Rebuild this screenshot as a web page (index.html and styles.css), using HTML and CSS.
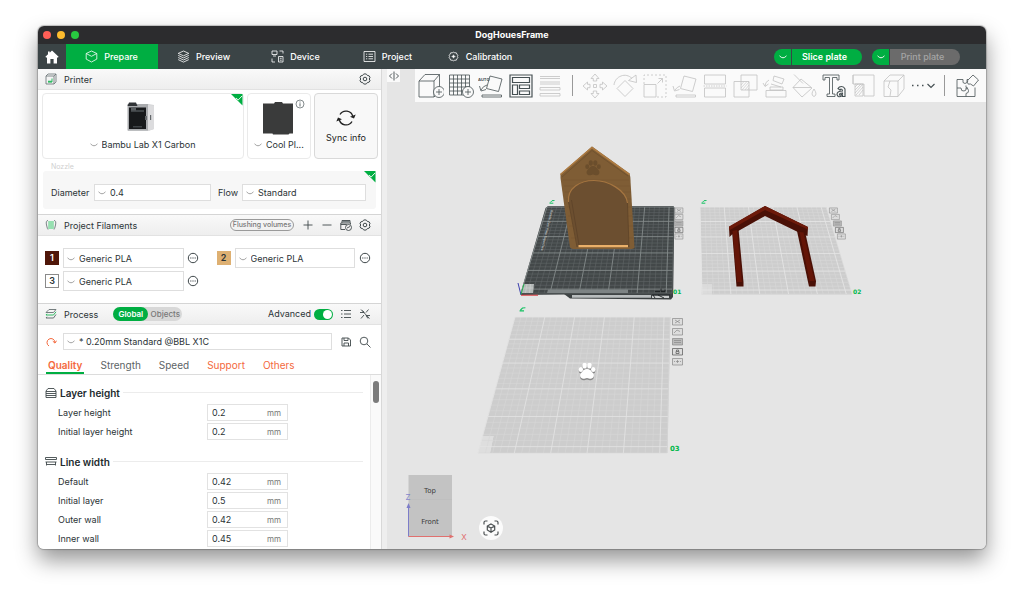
FILE: index.html
```html
<!DOCTYPE html>
<html lang="en">
<head>
<meta charset="utf-8">
<title>DogHouesFrame</title>
<link rel="stylesheet" href="styles.css">
</head>
<body>
<svg class="defs" aria-hidden="true">
  <symbol id="chev" viewBox="0 0 8 8"><path d="M.5 2.800Q4 6.800 7.500 2.800" fill="none" stroke="currentColor" stroke-width=".9"/></symbol>
  <symbol id="gear" viewBox="0 0 12 12"><g fill="none" stroke="currentColor"><path d="M4.4 1.3 6 .8l1.6.5.8 1.2 1.7.3.9 1.5-.7 1.7.7 1.7-.9 1.5-1.7.3-.8 1.2-1.6.5-1.6-.5-.8-1.2-1.7-.3L1 7.7 1.700 6 1 4.300l.9-1.500 1.700-.3z"/><circle cx="6" cy="6" r="1.800"/></g></symbol>
  <symbol id="dots" viewBox="0 0 12 12"><circle cx="6" cy="6" r="4.700" fill="none" stroke="currentColor"/><path d="M3.200 5.500h1.200v1H3.200zM5.400 5.500h1.200v1H5.400zM7.600 5.500h1.200v1H7.600z" fill="currentColor"/></symbol>
  <symbol id="ok" viewBox="0 0 12 12"><path d="M0 0h11.500v11.500z" fill="#00ae42"/><path d="m5 4 2.200 2L11 2" fill="none" stroke="#fff" stroke-width=".9"/></symbol>
  <symbol id="pen" viewBox="0 0 6 4"><path d="M.5 3.200h3.800M1.200 2.600 3 .7l2.500-.2" fill="none" stroke="#12c160" stroke-width="1"/></symbol>
  <symbol id="paw" viewBox="0 0 20 20"><ellipse cx="2.800" cy="8.300" rx="2.500" ry="3"/><ellipse cx="7.200" cy="3.800" rx="2.600" ry="3.400"/><ellipse cx="12.900" cy="3.800" rx="2.600" ry="3.400"/><ellipse cx="17.300" cy="8.300" rx="2.500" ry="3"/><path d="M10 7.500c3.500 0 4.500 2.500 6.700 4.700 2.800 2.900 1 7-2.400 7-1.700 0-2.600-1-4.300-1s-2.600 1-4.300 1c-3.400 0-5.200-4.100-2.400-7C5.500 10 6.500 7.500 10 7.500z"/></symbol>
</svg>

<main class="window">
  <header class="titlebar">
    <div class="lights"><i class="light close"></i><i class="light min"></i><i class="light max"></i></div>
    <h1 class="title">DogHouesFrame</h1>
  </header>

  <nav class="navbar">
    <button class="home" aria-label="Home"><svg class="i14" viewBox="0 0 14 14"><path d="M7 .5 13.600 6.800 12.800 7.800 12 7.200V13.400H8.600V9H5.400v4.400H2V7.200l-.8.6-.8-1L3 4.300V1.500h1.700v1.200z" fill="#fff"/></svg></button>
    <button class="navtab active"><svg class="i13" viewBox="0 0 13 13"><path d="M6.500 1 11.800 3.500v5.600L6.500 12 1.200 9.100V3.500zM1.200 3.500 6.500 6.300l5.300-2.800" class="ln"/></svg>Prepare</button>
    <button class="navtab"><svg class="i13" viewBox="0 0 13 13"><path d="m6.500 1 5.300 2.400-5.300 2.400-5.300-2.400zM1.200 5.400l5.300 2.500 5.300-2.500M1.200 7.500l5.300 2.500 5.300-2.500M1.200 9.600l5.300 2.500 5.300-2.500" class="ln"/></svg>Preview</button>
    <button class="navtab"><svg class="i13" viewBox="0 0 13 13"><path d="M1 1h5v3.500H1zM2 6h3M8.500 1H12v2.500M1 8.500V12h3M7.500 6.500H12V12H7.500zM8.800 8.300h1.900M8.800 10.200h1.900" class="ln"/></svg>Device</button>
    <button class="navtab"><svg class="i13" viewBox="0 0 13 13"><path d="M1 1.500h11v10H1zM3 4.200h1.200M5.500 4.200H10M3 6.500h1.200M5.500 6.500H10M3 8.800h1.200M5.500 8.800H10" class="ln"/></svg>Project</button>
    <button class="navtab"><svg class="i13" viewBox="0 0 13 13"><path d="m6.500 2.200 1.300.6 1.500 0 .6 1.400 1 1-.5 1.300.5 1.300-1 1-.6 1.400-1.500 0-1.300.6-1.300-.6-1.500 0-.6-1.400-1-1 .5-1.300-.5-1.300 1-1 .6-1.400 1.500 0z" class="ln"/><path d="m6.500 4.700.6 1.200 1.300.6-1.300.6-.6 1.200-.6-1.200-1.300-.6 1.300-.6z" fill="#fff" stroke="#fff" stroke-width=".4"/></svg>Calibration</button>
    <div class="actions">
      <div class="split"><button class="drop" aria-label="Slice options"><svg class="i8"><use href="#chev"/></svg></button><button class="go">Slice plate</button></div>
      <div class="split"><button class="drop" aria-label="Print options"><svg class="i8"><use href="#chev"/></svg></button><button class="go off">Print plate</button></div>
    </div>
  </nav>

  <div class="work">
    <aside class="sidebar">
      <section>
        <div class="bar first">
          <svg class="i12" viewBox="0 0 12 12"><path d="M1 3h8v8H1zM1 3l2-2h8L9 3M11 1v8L9 11" fill="none" stroke="#667072" stroke-width=".8"/><path d="M3 9h4V5.500" fill="none" stroke="#2fbb63"/><path d="M3 8.500h4" stroke="#2fbb63" stroke-width="1.500"/></svg>
          <h2 class="name">Printer</h2>
          <button class="ib push" aria-label="Printer settings"><svg class="i12"><use href="#gear"/></svg></button>
        </div>
        <div class="cards">
          <div class="card wide">
            <svg class="ok"><use href="#ok"/></svg>
            <svg class="pic" viewBox="0 0 34 34"><path d="M3 3h20l6 1v24l-6 2H3z" fill="#cfd0d2"/><path d="M23 4l6 .5V28l-6 2z" fill="#dcdcde"/><path d="M2.500 3h20.500v26.500h-20.500z" fill="#a9abae"/><path d="M4 6.500h17V28H4z" fill="#17191b"/><path d="M4 1.500h7l1.500 3.500H2.500z" fill="#303336"/><path d="M6 9h13v2H6zM8 25h9v1.500H8z" fill="#3e4346"/><path d="M6 6.500h5v3H6z" fill="#5a5e61"/><path d="M20 15h2v4h-2zM25 14h1.200v5H25z" fill="#64686b"/></svg>
            <label class="pick"><svg class="i8"><use href="#chev"/></svg><select aria-label="Printer model"><option>Bambu Lab X1 Carbon</option></select></label>
          </div>
          <div class="card">
            <svg class="info" viewBox="0 0 10 10"><circle cx="5" cy="5" r="4" fill="none" stroke="#667072" stroke-width=".8"/><path d="M5 4.300V7.500M5 2.500v1" stroke="#667072"/></svg>
            <svg class="pic" viewBox="0 0 32 34"><path d="M1 2.500h11l1-1.500h7l1 1.500h10v30h-3.500l-1 1H11l-.5-1H1z" fill="#3a3b3b"/></svg>
            <label class="pick"><svg class="i8"><use href="#chev"/></svg><select aria-label="Plate type"><option>Cool Pl...</option></select></label>
          </div>
          <button class="card sync"><svg class="i20" viewBox="0 0 20 20"><path d="M4 6.500A7 7 0 0 1 16.800 8.500M16 13.500A7 7 0 0 1 3.200 11.500" fill="none" stroke="currentColor" stroke-width="1.300"/><path d="m14 8.800 4 1.700 1.700-4zM6 11.200 2 9.500.3 13.500z" fill="currentColor"/></svg>Sync info</button>
        </div>
        <p class="legend">Nozzle</p>
        <div class="nozzle">
          <svg class="ok"><use href="#ok"/></svg>
          <label for="dia">Diameter</label>
          <div class="sel"><svg class="i8"><use href="#chev"/></svg><select id="dia"><option>0.4</option></select></div>
          <label for="flow" class="flow">Flow</label>
          <div class="sel grow"><svg class="i8"><use href="#chev"/></svg><select id="flow"><option>Standard</option></select></div>
        </div>
      </section>

      <section>
        <div class="bar">
          <svg class="i12" viewBox="0 0 12 12"><path d="M3 1.500Q.5 1.500 1.500 6T3 10.500M9 1.500q2.500 0 1.500 4.500T9 10.500" fill="none" stroke="#7b8486"/><path d="M3.500 2h5v8h-5z" fill="#c9f0d6"/><path d="M4 2v8M6 2v8M8 2v8" stroke="#4cc67a" stroke-width=".8"/></svg>
          <h2 class="name">Project Filaments</h2>
          <button class="flush push">Flushing volumes</button>
          <button class="ib" aria-label="Add filament"><svg class="i12" viewBox="0 0 12 12"><path d="M6 1.500v9M1.500 6h9" class="st"/></svg></button>
          <button class="ib" aria-label="Remove filament"><svg class="i12" viewBox="0 0 12 12"><path d="M1.500 6h9" class="st"/></svg></button>
          <button class="ib" aria-label="Sync filaments"><svg class="i12" viewBox="0 0 12 12"><path d="M5 10.500H.8V4h9.700v1.500M2 4V1.500h8V4M.8 5.500h6" class="st"/><path d="M2 2h8v1.500H2z" fill="#7a8385"/><circle cx="8.500" cy="8.500" r="3" class="st"/><path d="m7 9 3-1.500" class="st"/></svg></button>
          <button class="ib" aria-label="Filament settings"><svg class="i12"><use href="#gear"/></svg></button>
        </div>
        <div class="filaments">
          <div class="fil"><span class="sw brown">1</span><div class="sel grow"><svg class="i8"><use href="#chev"/></svg><select aria-label="Filament 1"><option>Generic PLA</option></select></div><button class="ib" aria-label="Edit filament 1"><svg class="i12"><use href="#dots"/></svg></button></div>
          <div class="fil"><span class="sw tan">2</span><div class="sel grow"><svg class="i8"><use href="#chev"/></svg><select aria-label="Filament 2"><option>Generic PLA</option></select></div><button class="ib" aria-label="Edit filament 2"><svg class="i12"><use href="#dots"/></svg></button></div>
          <div class="fil"><span class="sw">3</span><div class="sel grow"><svg class="i8"><use href="#chev"/></svg><select aria-label="Filament 3"><option>Generic PLA</option></select></div><button class="ib" aria-label="Edit filament 3"><svg class="i12"><use href="#dots"/></svg></button></div>
        </div>
      </section>

      <section class="process">
        <div class="bar">
          <svg class="i12" viewBox="0 0 12 12"><path d="M1 4.500 4 1.500h7L8.500 4.500z" fill="none" stroke="#667072" stroke-width=".9"/><path d="M11 3.800 8.500 7H1l1-1.200" fill="none" stroke="#2fbb63"/><path d="M11 6.500 8.500 10H1l1-1.200" fill="none" stroke="#667072"/></svg>
          <h2 class="name">Process</h2>
          <div class="seg"><button class="on">Global</button><button>Objects</button></div>
          <label for="adv" class="push">Advanced</label>
          <input type="checkbox" id="adv" class="toggle" checked>
          <button class="ib" aria-label="List view"><svg class="i12" viewBox="0 0 12 12"><path d="M1 2.500h1.500M4 2.500h7M1 6h1.500M4 6h7M1 9.500h1.500M4 9.500h7" class="st"/></svg></button>
          <button class="ib" aria-label="Compare presets"><svg class="i12" viewBox="0 0 12 12"><path d="M2 1.500 10.500 10.500M1 4.500h4M3.500 2.500l1.800 2M11 7.500H7M7 7.500l2 3M7 4.500 9.500 1.500M2 10.500l3-3.500" class="st"/></svg></button>
        </div>
        <div class="preset">
          <button class="ib reset" aria-label="Reset preset"><svg class="i12" viewBox="0 0 12 12"><path d="M4 10A4 4 0 1 1 10 6.500M7.800 5.200l2.200 1.900 1.500-2.400" fill="none" stroke="currentColor"/></svg></button>
          <div class="sel grow"><svg class="i8"><use href="#chev"/></svg><select aria-label="Process preset"><option>* 0.20mm Standard @BBL X1C</option></select></div>
          <button class="ib" aria-label="Save preset"><svg class="i12" viewBox="0 0 12 12"><path d="M2 2h6.500L10.500 4v6H2zM4 2v2.500h4V2M4 10V7h4.500v3" class="st"/></svg></button>
          <button class="ib" aria-label="Search settings"><svg class="i12" viewBox="0 0 12 12"><circle cx="5" cy="5" r="3.800" class="st"/><path d="m8 8 3.500 3.500" class="st"/></svg></button>
        </div>
        <div class="tabs">
          <button class="tab current">Quality</button><button class="tab">Strength</button><button class="tab">Speed</button><button class="tab changed">Support</button><button class="tab changed">Others</button>
        </div>
        <div class="scroller">
          <div class="params">
            <h3 class="group"><svg class="i12" viewBox="0 0 12 12"><path d="M1 10.500V4L3 1.500h6L11 4v6.500zM1 4.500h10M1 6.500h10M1 8.500h10" class="st"/></svg>Layer height</h3>
            <div class="row"><label for="p1">Layer height</label><span class="num"><input id="p1" value="0.2"><span>mm</span></span></div>
            <div class="row"><label for="p2">Initial layer height</label><span class="num"><input id="p2" value="0.2"><span>mm</span></span></div>
            <h3 class="group"><svg class="i12" viewBox="0 0 12 12"><path d="M.5 1.500h11v2H.5zM.5 6h11M1.500 6v3.500M10.500 6v3.500M1.500 8.500h9" class="st"/></svg>Line width</h3>
            <div class="row"><label for="p3">Default</label><span class="num"><input id="p3" value="0.42"><span>mm</span></span></div>
            <div class="row"><label for="p4">Initial layer</label><span class="num"><input id="p4" value="0.5"><span>mm</span></span></div>
            <div class="row"><label for="p5">Outer wall</label><span class="num"><input id="p5" value="0.42"><span>mm</span></span></div>
            <div class="row"><label for="p6">Inner wall</label><span class="num"><input id="p6" value="0.45"><span>mm</span></span></div>
          </div>
          <div class="track"><div class="thumb"></div></div>
        </div>
      </section>
    </aside>

    <div class="splitter"></div>

    <section class="stage">
      <svg class="scene" viewBox="387 69 599 480" preserveAspectRatio="xMinYMin meet">
        <g id="plate1">
          <path d="M564 294 570 298.500 671 299.500 673 297V290z" fill="#3c4142"/>
          <path d="M572 295h79v2.800h-79z" fill="#b9bdbe"/>
          <path d="M548 206h125.500l1 2-1.300 85-1.500 1.500L567 294.500l-46 .5-.5-1.500L545.500 208z" fill="#434849"/>
          <g class="grid" data-quad="547,207 674,207 672,293 521,293" data-n="26" data-minor="#5f6566" data-major="#858b8b"></g>
          <path d="M548 289.500h80v3.500h-81z" fill="#7d8384"/>
          <path d="M652 295.500h17v2.500h-17z" fill="#c9cccc"/><path d="M652 295h18M653 295l2 3M658 295l6 3M655 291.500h5M661 288.500v3h4v-2" fill="none" stroke="#1c2021" stroke-width=".9"/>
          <path d="M523.500 284h10.500l-1 9h-12z" fill="#b5b9b8"/><path d="M527 284l-1.500 9M530.500 284l-1 9M522.500 288h11" stroke="#d2d5d4" stroke-width=".6"/>
          <text class="plate-text" transform="translate(551 210) rotate(104)">Bambu Cool Plate SuperTack</text>
          <path d="M521 295 518 283" stroke="#3b3fae"/><path d="M521 294.500 524 284" stroke="#1fb04c"/><path d="M521 295.200h17" stroke="#d9363a"/>
        </g>
        <g id="house">
          <path d="M592 146.500 629.500 173.500 630.300 177 634.500 248 632 249H572.500L570 247.500 560.500 178V174z" fill="#7f5d35"/>
          <path d="M560.500 174.500 592 147.500 629.500 174.500" fill="none" stroke="#ad7b42" stroke-width="1.600"/>
          <path d="M562 177 592 150.500 628 176" fill="none" stroke="#6b4d2b" stroke-width=".7"/>
          <path d="M563 180h66M564 186h66M565 192h66M566 199h65M567 207h65M568 216h64M569 226h64M571 238h62" stroke="#76552f" stroke-width=".6"/>
          <path d="M577.500 247 568.500 202C567 188 580 180.500 594 180.500S626 190 627.500 203L629 247z" fill="#6c4f30"/>
          <path d="M568.500 202C567 188 580 180.500 594 180.500S626 190 627.500 203" fill="none" stroke="#a57540" stroke-width="1.200"/>
          <path d="M568.500 202 577 247M571.500 200 579 245M627.500 203 629 247" fill="none" stroke="#5a4126" stroke-width=".7"/>
          <path d="M578.500 245H628v2.300h-49.500z" fill="#eab069"/>
          <svg x="585" y="160" width="16" height="16" fill="#6b4e2c"><use href="#paw"/></svg>
        </g>
        <g id="plate2">
          <path d="M700 207H826L852 294.500H712V284.500H702z" fill="#cdcdcd"/>
          <path d="M702 284.500h10v10h-11z" fill="#dcdcdc"/>
          <g class="grid" data-quad="700,207 826,207 852,294 702,294" data-n="26" data-minor="#d8d8d8" data-major="#e4e4e4"></g>
          <path d="M729 227 765 206 808 227 807.500 236 803 234.500 765 216 732 234.500 729.500 237z" fill="#4a1006"/>
          <path d="M729 226.500 765 206 808 227V229.500L765 210 729 230.500z" fill="#6d1a0a"/>
          <path d="M732 230.500 738.500 229 743.500 282V286.500H736.500z" fill="#4a1006"/><path d="M732.500 231 737 230 742 282H737z" fill="#641507"/>
          <path d="M797 231 805 231.500 816 281 815.500 286.500H809z" fill="#4a1006"/><path d="M799.500 232 803.500 232.500 814.500 281H809.500z" fill="#641507"/>
        </g>
        <g id="plate3">
          <path d="M515 317H670.500L667.500 453H490L493.500 436H482.500z" fill="#cdcdcd"/>
          <path d="M482.500 436h11L490 453H478z" fill="#dedede"/>
          <g class="grid" data-quad="515,317 670,317 667,453 478,453" data-n="26" data-minor="#d7d7d7" data-major="#e2e2e2"></g>
          <svg x="578" y="364" width="18" height="17" fill="#888"><use href="#paw"/></svg>
          <svg x="578" y="362.500" width="18" height="17" fill="#fff"><use href="#paw"/></svg>
        </g>
        <g id="tags"></g>
        <svg x="549" y="200" width="6" height="4"><use href="#pen"/></svg>
        <svg x="701" y="200" width="6" height="4"><use href="#pen"/></svg>
        <svg x="519" y="307" width="7" height="5"><use href="#pen"/></svg>
        <text class="plate-no" x="673" y="294">01</text>
        <text class="plate-no" x="853" y="294">02</text>
        <text class="plate-no big" x="670" y="451">03</text>
        <path d="M408.500 475H452v61.500h-43.500z" fill="#c3c3c3"/><path d="M408.500 499.500H452" stroke="#bcbcbc" stroke-width=".6"/>
        <text class="face" x="430" y="493">Top</text><text class="face" x="430" y="524">Front</text>
        <path d="M408.500 536.500V508" stroke="#7d7dc9"/><path d="m408.500 503 2 5h-4z" fill="#7d7dc9"/>
        <path d="M408.500 536.500H450" stroke="#e0706e"/><path d="m454 536.500-4.500 2v-4z" fill="#e0706e"/>
        <text class="axis z" x="408" y="500">Z</text><text class="axis x" x="464" y="540">X</text>
      </svg>
      <div class="overlay">
        <button class="collapse" aria-label="Collapse sidebar"><svg class="i12" viewBox="0 0 12 12"><path d="M4 3.500 1.500 6 4 8.500M8 3.500 10.500 6 8 8.500M6 1.500v9" class="st"/></svg></button>
        <div class="toolbar">
          <button class="tool" aria-label="Add model"><svg viewBox="0 0 26 26"><path d="M1 8h15v16H1zM1 8l6-6.500h14.500L16 8M21.500 1.500V14M16 24l1-1"/><circle cx="21" cy="19" r="5.500" fill="#fafafa"/><path d="M21 16v6M18 19h6"/></svg></button>
          <button class="tool" aria-label="Add plate"><svg viewBox="0 0 26 26"><path d="M1.500 2h20v20h-20zM5.500 2v20M9.500 2v20M13.500 2v20M17.500 2v20M1.500 6h20M1.500 10h20M1.500 14h20M1.500 18h20"/><circle cx="20" cy="19" r="5.500" fill="#fafafa"/><path d="M20 16v6M17 19h6"/></svg></button>
          <button class="tool" aria-label="Auto orient"><svg viewBox="0 0 26 26"><path d="m12 3 12 3-3.500 12.500-12-3zM4 24h19.500v-2H4zM9 12q-4 1-6 5M1.500 13l1.500 5 5-1.500"/><text x="0" y="8" class="auto">AUTO</text></svg></button>
          <button class="tool" aria-label="Arrange"><svg viewBox="0 0 26 26"><path d="M2 2h22v22H2zM4.500 4.500h17v5h-17zM4.500 12h5v9.500h-5zM11.500 12h10v3.500h-10zM11.500 18h10v3.500h-10z" stroke-width="1.200"/></svg></button>
          <button class="tool off" aria-label="Layers"><svg viewBox="0 0 26 26"><path d="M3 3.500h20M3 5.500h20M3 9h20M3 11h20M3 14.500h20v2.500H3zM3 20.500h20v2.500H3z"/></svg></button>
          <i class="sep"></i>
          <button class="tool off" aria-label="Move"><svg viewBox="0 0 26 26"><path d="m13 1 4 4.500h-2.300V8h-3.400V5.500H9zM13 25l4-4.500h-2.300V18h-3.400v2.500H9zM1 13l4.500-4v2.300H8v3.400H5.500V17zM25 13l-4.500-4v2.300H18v3.400h2.500V17zM11.500 11.500h3v3h-3z"/></svg></button>
          <button class="tool off" aria-label="Rotate"><svg viewBox="0 0 26 26"><path d="m13 7.500 8 8-8 8-8-8zM2 12C3 3 14-1 20 5.500M16.500 7.500 24.500 9.500 24 2z"/></svg></button>
          <button class="tool off" aria-label="Scale"><svg viewBox="0 0 26 26"><path d="M2 11.500h12V24H2z"/><path d="M2 11V2h22v22H14" stroke-dasharray="2 2"/><path d="m15.500 10.500 5-5M16.500 5.500h4v4"/></svg></button>
          <button class="tool off" aria-label="Lay on face"><svg viewBox="0 0 26 26"><path d="m12 3 12 3-3.500 12.500-12-3zM4 24h19.500v-2H4zM8 13q-3 1-5 4M1 13l1.500 5 5-1.500"/></svg></button>
          <button class="tool off" aria-label="Cut"><svg viewBox="0 0 26 26"><path d="M2.500 2h21v9h-21zM2.500 15h21v9h-21z"/><path d="M1.500 13h23" stroke-dasharray="1.500 1"/></svg></button>
          <button class="tool off" aria-label="Boolean"><svg viewBox="0 0 26 26"><path d="M9 2h16v15H9zM2 8.500h15V24H2z"/><path d="M9 12l3-3.500M9 15l6-6.500M10 17l7-8M13 17l4-5M15.500 17l1.500-2" stroke-width=".6"/></svg></button>
          <button class="tool off" aria-label="Supports"><svg viewBox="0 0 26 26"><path d="M4 17.500h20V24H4zM8 14h13v3H8zM12 3l10 3-2 5-9-3.500zM7 7q-4 2-4 6M1 10l2 3.500L6.500 11M9 11l10 3"/></svg></button>
          <button class="tool off" aria-label="Paint"><svg viewBox="0 0 26 26"><path d="m10 6 11 9-10 9-9-9.500zM2 14.500h18M3 1.500l9 9M23 16q-4 6 0 7.500Q27 22 23 16z"/></svg></button>
          <button class="tool" aria-label="Text"><svg viewBox="0 0 26 26"><path d="M2 2h16v5h-2V4.500h-4.500V21H14v2.500H6V21h2.500V4.500H4V7H2z"/><path d="M17 15.500q1-2 3.500-2t3.500 2.500v7.500h-2.500v-1q-4.500 3-5.500-1 0-3.500 5.500-3.500 0-2-1.500-2l-1 1zM21.500 20q-3 0-3 1.500t3-.5z" stroke-width="1.100"/></svg></button>
          <button class="tool off" aria-label="Modifier"><svg viewBox="0 0 26 26"><path d="M2 2h21v21H13V11H2zM4 11h8v12H4zM2 2v9"/><path d="M4 14l3-3M4 17l6-6M4 20l8-9M5 22l7-8M8 22l4-5" stroke-width=".7"/></svg></button>
          <button class="tool off" aria-label="Seam"><svg viewBox="0 0 26 26"><path d="M3 8h14v15.500H3zM3 8l6-6h14l-6 6M23 2v14l-6 7.500M9 8l-2 6 3 3-1 6"/></svg></button>
          <button class="more" aria-label="More tools"><svg viewBox="0 0 28 12"><path d="M3 5.500h1.500M8 5.500h1.500M13 5.500h1.500" stroke-width="1.300"/><path d="m18.500 4 3.500 3.500 3.500-3.500" stroke-width="1.200"/></svg></button>
          <i class="sep"></i>
          <button class="tool" aria-label="Assembly view"><svg viewBox="0 0 26 26"><path d="M3 6.500h6q-1 4 2 4t2-4h1M3 6.500v17h18v-9M3 15h4q0 3.500 3 3t2-3h2M12 23.500v-3q3-.5 2.500-3T12 14.500v-2M14 7l5-5 5.500 5-5 6-3-2q-3 1-3-1.500T14 7"/></svg></button>
        </div>
      </div>
      <button class="fit" aria-label="Fit camera"><svg viewBox="0 0 16 16"><path d="M1 4.500V2.500Q1 1 2.500 1h2M11.500 1h2Q15 1 15 2.500v2M15 11.500v2q0 1.500-1.500 1.500h-2M4.500 15h-2Q1 15 1 13.500v-2M8 4l3.700 2v4L8 12.200 4.300 10V6zM4.300 6 8 8l3.700-2M8 8v4"/></svg></button>
    </section>
  </div>
</main>
<script src="scene.js"></script>
</body>
</html>
```

FILE: styles.css
```css
* { box-sizing: border-box; }
body {
  margin: 0;
  height: 100vh;
  padding: 26px 38px 50px;
  display: flex;
  background: #fff;
  color: #2b3336;
  font: 9px/12px Inter, "Liberation Sans", sans-serif;
}
h1, h2, h3, p { margin: 0; font: inherit; }
button, input, select { font: inherit; color: inherit; margin: 0; padding: 0; border: 0; background: none; }
button { display: inline-flex; align-items: center; justify-content: center; }
select { appearance: none; outline: 0; }
svg { display: block; flex: none; }
.defs { position: absolute; width: 0; height: 0; }
.i8 { width: 8px; height: 8px; }
.i12 { width: 12px; height: 12px; }
.i13 { width: 13px; height: 13px; }
.i14 { width: 14px; height: 14px; }
.i20 { width: 20px; height: 20px; }
.st { fill: none; stroke: #3f484b; stroke-width: .9; }
.ln { fill: none; stroke: #fff; stroke-width: .8; }
.push { margin-left: auto; }
.grow { flex: 1; }

.window {
  flex: 1;
  min-width: 0;
  display: flex;
  flex-direction: column;
  overflow: hidden;
  border-radius: 6px;
  background: #e5e5e5;
  box-shadow: 0 0 1px 1px rgba(0, 0, 0, .22), 0 11px 22px rgba(0, 0, 0, .42);
}
.titlebar {
  display: grid;
  grid-template-columns: 1fr auto 1fr;
  align-items: center;
  height: 18px;
  background: #2c2c2e;
  color: #fff;
}
.lights { display: flex; gap: 6px; padding-left: 5px; }
.light { width: 8px; height: 8px; border-radius: 50%; }
.close { background: #ff5f57; }
.min { background: #febc2e; }
.max { background: #28c840; }
.title { font-weight: 700; }

.navbar { display: flex; height: 25px; background: #3b4446; color: #fff; }
.home { width: 28px; }
.navtab { width: 92px; gap: 6px; padding-right: 1px; font-weight: 500; }
.navtab.active { background: #00ae42; }
.actions { display: flex; align-items: center; gap: 10px; margin-left: auto; padding-right: 26px; }
.split { display: flex; gap: 1px; height: 16px; border-radius: 8px; overflow: hidden; }
.split button { height: 16px; background: #00ae42; font-weight: 600; }
.drop { width: 17px; }
.go { width: 70px; padding-right: 5px; }
.split .off { background: #6b6b6b; color: #a5a5a5; font-weight: 500; }

.work { flex: 1; min-height: 0; display: flex; }
.sidebar { width: 343px; flex: none; display: flex; flex-direction: column; background: #fff; }
.splitter { width: 6px; background: #eee; border-left: 1px solid #d8d8d8; }

.bar {
  display: flex;
  align-items: center;
  height: 22px;
  padding: 0 7px;
  border-top: 1px solid #d5d5d5;
  border-bottom: 1px solid #e2e2e2;
  background: linear-gradient(#f9f9f9, #eeeeee);
}
.bar.first { height: 21px; border-top: 0; }
.name { margin-left: 7px; padding-top: 1px; }
.ib { width: 19px; height: 16px; color: #3f484b; flex: none; }

.cards { display: flex; gap: 3px; padding: 3px 3px 0 4px; }
.card {
  position: relative;
  display: flex;
  flex-direction: column;
  align-items: center;
  width: 64px;
  height: 66px;
  padding-top: 7px;
  border: 1px solid #eaeaea;
  border-radius: 4px;
}
.wide { flex: 1; }
.sync { justify-content: center; gap: 4px; padding-top: 0; background: #f8f8f8; border-color: #d9d9d9; color: #222; }
.ok { position: absolute; top: 0; right: 0; width: 12px; height: 12px; }
.info { position: absolute; top: 5px; right: 5px; width: 10px; height: 10px; }
.pic { width: 34px; height: 34px; margin-right: 2px; }
.pick { display: flex; align-items: center; gap: 4px; margin-top: 4px; }
.pick svg, .sel svg { color: #999; }
.legend { padding: 2px 0 0 13px; height: 12px; font-size: 7px; color: #cfcfcf; }
.nozzle {
  position: relative;
  display: flex;
  align-items: center;
  margin: 0 5px 5px;
  padding: 5px 10px 0 8px;
  height: 38px;
  background: #f7f7f7;
  border-radius: 3px;
}
.nozzle label { width: 43px; }
.nozzle .flow { width: 31px; padding-left: 7px; }
.nozzle .sel { width: 117px; }
.sel {
  display: flex;
  align-items: center;
  gap: 4px;
  height: 17px;
  padding: 1px 0 0 3px;
  border: 1px solid #dedede;
  background: #fff;
}
.sel select { flex: 1; min-width: 0; }
.nozzle .grow { width: auto; }

.flush { height: 12px; width: 64px; margin-right: 4px; border: 1px solid #9a9a9a; border-radius: 6px; font-size: 7px; line-height: 8px; font-weight: 500; color: #777; }
.filaments { display: grid; grid-template-columns: 1fr 1fr; gap: 3px 14px; padding: 12px 7px; }
.fil { display: flex; align-items: center; }
.fil .sel { height: 20px; margin: 0 0 0 4px; }
.sw { width: 14px; height: 14px; border: 1px solid #8a8a8a; text-align: center; font-weight: 600; }
.brown { background: #4f1608; border-color: #4f1608; color: #fff; }
.tan { background: #deb072; border-color: #deb072; }

.process { flex: 1; min-height: 0; display: flex; flex-direction: column; }
.seg { display: flex; margin-left: 15px; height: 14px; border-radius: 7px; background: #d8d8d8; color: #777; font-size: 8px; font-weight: 500; }
.seg button { width: 34px; }
.seg .on { width: 35px; border-radius: 7px; background: #00ae42; color: #fff; font-weight: 600; }
.toggle { appearance: none; width: 19px; height: 11px; margin: 0 3px; border-radius: 6px; background: #00ae42; padding: 1px; }
.toggle::after { content: ""; display: block; width: 9px; height: 9px; margin-left: 8px; border-radius: 50%; background: #fff; }
.preset { display: flex; align-items: center; padding: 8px 7px 0 3px; }
.preset .sel { margin: 0 4px 0 3px; }
.reset { color: #f4693d; }
.tabs { display: flex; flex: none; gap: 14px; height: 25px; padding: 8px 8px 0; border-bottom: 1px solid #dcdcdc; font-size: 10px; }
.tab { padding: 0 2px; border-bottom: 2px solid transparent; color: #5c6366; }
.changed { color: #f4693d; }
.current { color: #f4693d; font-weight: 600; border-color: #00ae42; }
.scroller { flex: 1; min-height: 0; display: flex; overflow: hidden; }
.params { flex: 1; padding: 7px 7px 0; }
.group { display: flex; align-items: center; gap: 3px; height: 21px; font-size: 10px; font-weight: 600; color: #222a2d; }
.group::after { content: ""; flex: 1; height: 1px; background: #ececec; }
.row + .group { margin-top: 10px; }
.row { display: flex; align-items: center; height: 19px; padding-left: 13px; }
.row label { width: 149px; padding-top: 1px; }
.num { display: flex; align-items: center; width: 81px; height: 17px; padding: 0 6px 0 4px; border: 1px solid #e2e2e2; }
.num input { flex: 1; width: 40px; min-width: 0; outline: 0; }
.num span { color: #777; font-size: 8px; padding-top: 1px; }
.track { width: 11px; flex: none; padding: 6px 2px; background: #fafafa; border-left: 1px solid #ececec; }
.thumb { width: 6px; height: 22px; border-radius: 3px; background: #7b7b7b; }

.stage { position: relative; flex: 1; min-width: 0; background: #e5e5e5; }
.scene { position: absolute; inset: 0; width: 100%; height: 100%; }
.overlay { position: relative; display: flex; align-items: flex-start; justify-content: space-between; gap: 15px; }
.collapse { width: 13px; height: 13px; background: #fafafa; }
.toolbar { flex: 1; display: flex; align-items: center; height: 33px; padding: 0 4px 0 1px; background: #fafafa; }
.tool { flex: 1; min-width: 0; }
.toolbar svg { width: 26px; height: 26px; fill: none; stroke: #465053; stroke-width: .8; }
.tool.off svg { stroke: #c2c2c2; }
.more { width: 28px; }
.toolbar .more svg { width: 28px; height: 12px; }
.auto { font-size: 4px; font-weight: 700; fill: #3f484b; stroke: none; }
.sep { width: 1px; height: 21px; margin: 0 7px; background: #999; }
.fit { position: absolute; left: 92px; bottom: 9px; width: 24px; height: 24px; border-radius: 50%; background: #fbfbfb; }
.fit svg { width: 16px; height: 16px; fill: none; stroke: #4a4f51; stroke-width: 1.2; }
.plate-text { font-size: 3px; font-weight: 600; fill: #c4c7c7; }
.plate-no { font: 700 6px "DejaVu Sans", sans-serif; fill: #00b84a; }
.plate-no.big { font-size: 7px; }
.face { font: 7px "DejaVu Sans", sans-serif; fill: #3c3c3c; text-anchor: middle; }
.axis { font-size: 8px; text-anchor: middle; }
.axis.z { fill: #8484cc; }
.axis.x { fill: #e0706e; }
```

FILE: scene.js
```js
const NS = "http://www.w3.org/2000/svg";

function add(parent, name, attrs) {
  const el = document.createElementNS(NS, name);
  for (const key in attrs) el.setAttribute(key, attrs[key]);
  parent.appendChild(el);
}

// Draws a perspective grid inside the quad tl, tr, br, bl.
document.querySelectorAll(".grid").forEach((g) => {
  const [tl, tr, br, bl] = g.dataset.quad.split(" ").map((p) => p.split(",").map(Number));
  const n = Number(g.dataset.n);
  const mix = (a, b, t) => [a[0] + (b[0] - a[0]) * t, a[1] + (b[1] - a[1]) * t];
  const near = (bl[0] - br[0]) / (tl[0] - tr[0]);
  const paths = { minor: "", major: "" };
  for (let i = 0; i <= n; i++) {
    const t = i / n;
    const kind = i % 5 === 0 ? "major" : "minor";
    const depth = t / (t + near * (1 - t));
    const lines = [[mix(tl, tr, t), mix(bl, br, t)], [mix(tl, bl, depth), mix(tr, br, depth)]];
    lines.forEach(([a, b]) => { paths[kind] += `M${a}L${b}`; });
  }
  add(g, "path", { d: paths.minor, stroke: g.dataset.minor, "stroke-width": 0.6 });
  add(g, "path", { d: paths.major, stroke: g.dataset.major, "stroke-width": 0.9 });
});

// Five small buttons stand beside each plate.
const glyphs = ["M3 2l5 3M8 2L3 5", "M2 5l3-3 3 1.500", "M2 2.500h7M2 4.500h7", "M4 3.500h3v2H4zM4.500 3V2h2v1", "M2 3.500h1M5.500 2v3M4 3.500h3M8 3.500h1"];
const tags = document.getElementById("tags");
[[674.5, 207.500, 0, 0.8, 6.5], [829, 207.500, 2, 0.8, 6.5], [672, 318, 0, 1, 10]].forEach(([x, y, dx, scale, step]) => {
  glyphs.forEach((d, i) => {
    add(tags, "path", {
      d: "M.5 .5h10v6.500h-10z" + d,
      transform: `translate(${x + dx * i} ${y + step * i}) scale(${scale})`,
      fill: i === 2 ? "#bbb" : "#ddd", stroke: i === 3 ? "#555" : "#888", "stroke-width": 0.7
    });
  });
});
```
